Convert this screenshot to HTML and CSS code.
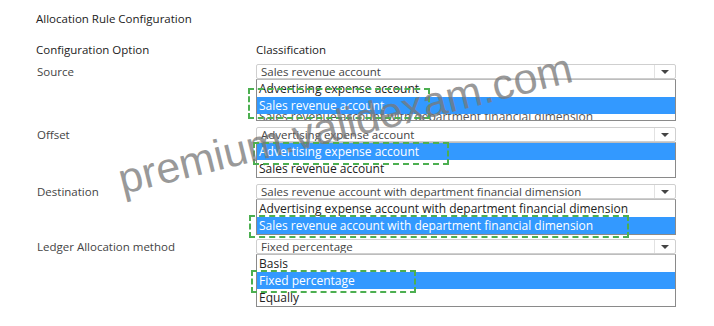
FILE: index.html
```html
<!DOCTYPE html>
<html>
<head>
  <link rel="stylesheet" href="styles.css">
</head>
<body>
  <div class="page">
    <h1 class="title">Allocation Rule Configuration</h1>

    <div class="config">
      <div class="head">Configuration Option</div>
      <div class="head">Classification</div>

      <!-- Source -->
      <div class="label">Source</div>
      <div class="field">
        <div class="select">
          <span class="value">Sales revenue account</span>
          <span class="arrow"></span>
        </div>
        <ul class="options clipped">
          <li>Advertising expense account</li>
          <li class="picked">Sales revenue account</li>
          <li class="under">Sales revenue account with department financial dimension</li>
        </ul>
      </div>

      <!-- Offset -->
      <div class="label">Offset</div>
      <div class="field">
        <div class="select">
          <span class="value">Advertising expense account</span>
          <span class="arrow"></span>
        </div>
        <ul class="options">
          <li class="picked">Advertising expense account</li>
          <li>Sales revenue account</li>
        </ul>
      </div>

      <!-- Destination -->
      <div class="label">Destination</div>
      <div class="field">
        <div class="select">
          <span class="value">Sales revenue account with department financial dimension</span>
          <span class="arrow"></span>
        </div>
        <ul class="options">
          <li>Advertising expense account with department financial dimension</li>
          <li class="picked">Sales revenue account with department financial dimension</li>
        </ul>
      </div>

      <!-- Ledger allocation method -->
      <div class="label tight">Ledger Allocation method</div>
      <div class="field tight">
        <div class="select">
          <span class="value">Fixed percentage</span>
          <span class="arrow"></span>
        </div>
        <ul class="options">
          <li>Basis</li>
          <li class="picked">Fixed percentage</li>
          <li>Equally</li>
        </ul>
      </div>
    </div>

    <!-- answer marks drawn over the lists -->
    <div class="mark mark-source"></div>
    <div class="mark mark-offset"></div>
    <div class="mark mark-dest"></div>
    <div class="mark mark-ledger"></div>

    <div class="watermark">premium.validexam.com</div>
  </div>
</body>
</html>
```

FILE: styles.css
```css
body {
  margin: 0;
  background: #fff;
  font-family: "Open Sans", "Noto Sans", sans-serif;
  color: #333;
}

.page {
  position: relative;
  width: 714px;
  height: 326px;
  overflow: hidden;
  padding: 11px 0 0 36px;
  box-sizing: border-box;
}

.title {
  margin: 0;
  font-size: 11.5px;
  font-weight: 400;
  line-height: 16px;
  color: #222;
}

.config {
  display: grid;
  grid-template-columns: 220px 420px;
  row-gap: 6px;
  margin-top: 15px;
  font-size: 11.5px;
}

.head {
  line-height: 16px;
  color: #222;
}

.label {
  padding-left: 1px;
  line-height: 15px;
  color: #444;
}

.tight {
  margin-top: -2px;
}

.field {
  display: flex;
  flex-direction: column;
}

.select {
  display: flex;
  height: 15px;
  border: 1px solid #cfcfcf;
  border-radius: 2px;
  box-sizing: border-box;
  line-height: 13px;
  color: #444;
}

.select .value {
  flex: 1;
  padding-left: 4px;
  white-space: nowrap;
  overflow: hidden;
}

.select .arrow {
  width: 20px;
  border-left: 1px solid #e2e2e2;
  display: flex;
  align-items: center;
  justify-content: center;
}

.select .arrow::after {
  content: "";
  border-left: 4px solid transparent;
  border-right: 4px solid transparent;
  border-top: 4px solid #444;
}

.options {
  list-style: none;
  margin: 0;
  padding: 0;
  border: 1px solid #8a8a8a;
  border-top-color: #bdbdbd;
  color: #222;
  font-size: 12px;
}

.options li {
  height: 17px;
  line-height: 17px;
  padding-left: 2px;
  white-space: nowrap;
}

.options li.picked {
  position: relative;
  z-index: 1;
  background: #3399ff;
  color: #fff;
}

.options.clipped {
  height: 42px;
  overflow: hidden;
  box-sizing: border-box;
}

.options li.under {
  margin-top: -6px;
  color: #555;
}

.mark {
  position: absolute;
  border: 2px dashed #4caf50;
  z-index: 2;
}

.mark-source {
  left: 248px;
  top: 88px;
  width: 178px;
  height: 27px;
}

.mark-offset {
  left: 253px;
  top: 142px;
  width: 192px;
  height: 19px;
}

.mark-dest {
  left: 249px;
  top: 215px;
  width: 376px;
  height: 19px;
}

.mark-ledger {
  left: 251px;
  top: 270px;
  width: 161px;
  height: 19px;
}

.watermark {
  position: absolute;
  left: 124px;
  top: 158px;
  z-index: 3;
  font-family: "Liberation Sans", Arial, sans-serif;
  font-size: 43px;
  line-height: 42px;
  color: rgba(120, 120, 120, 0.75);
  white-space: nowrap;
  transform: rotate(-14deg);
  transform-origin: left bottom;
}
```
